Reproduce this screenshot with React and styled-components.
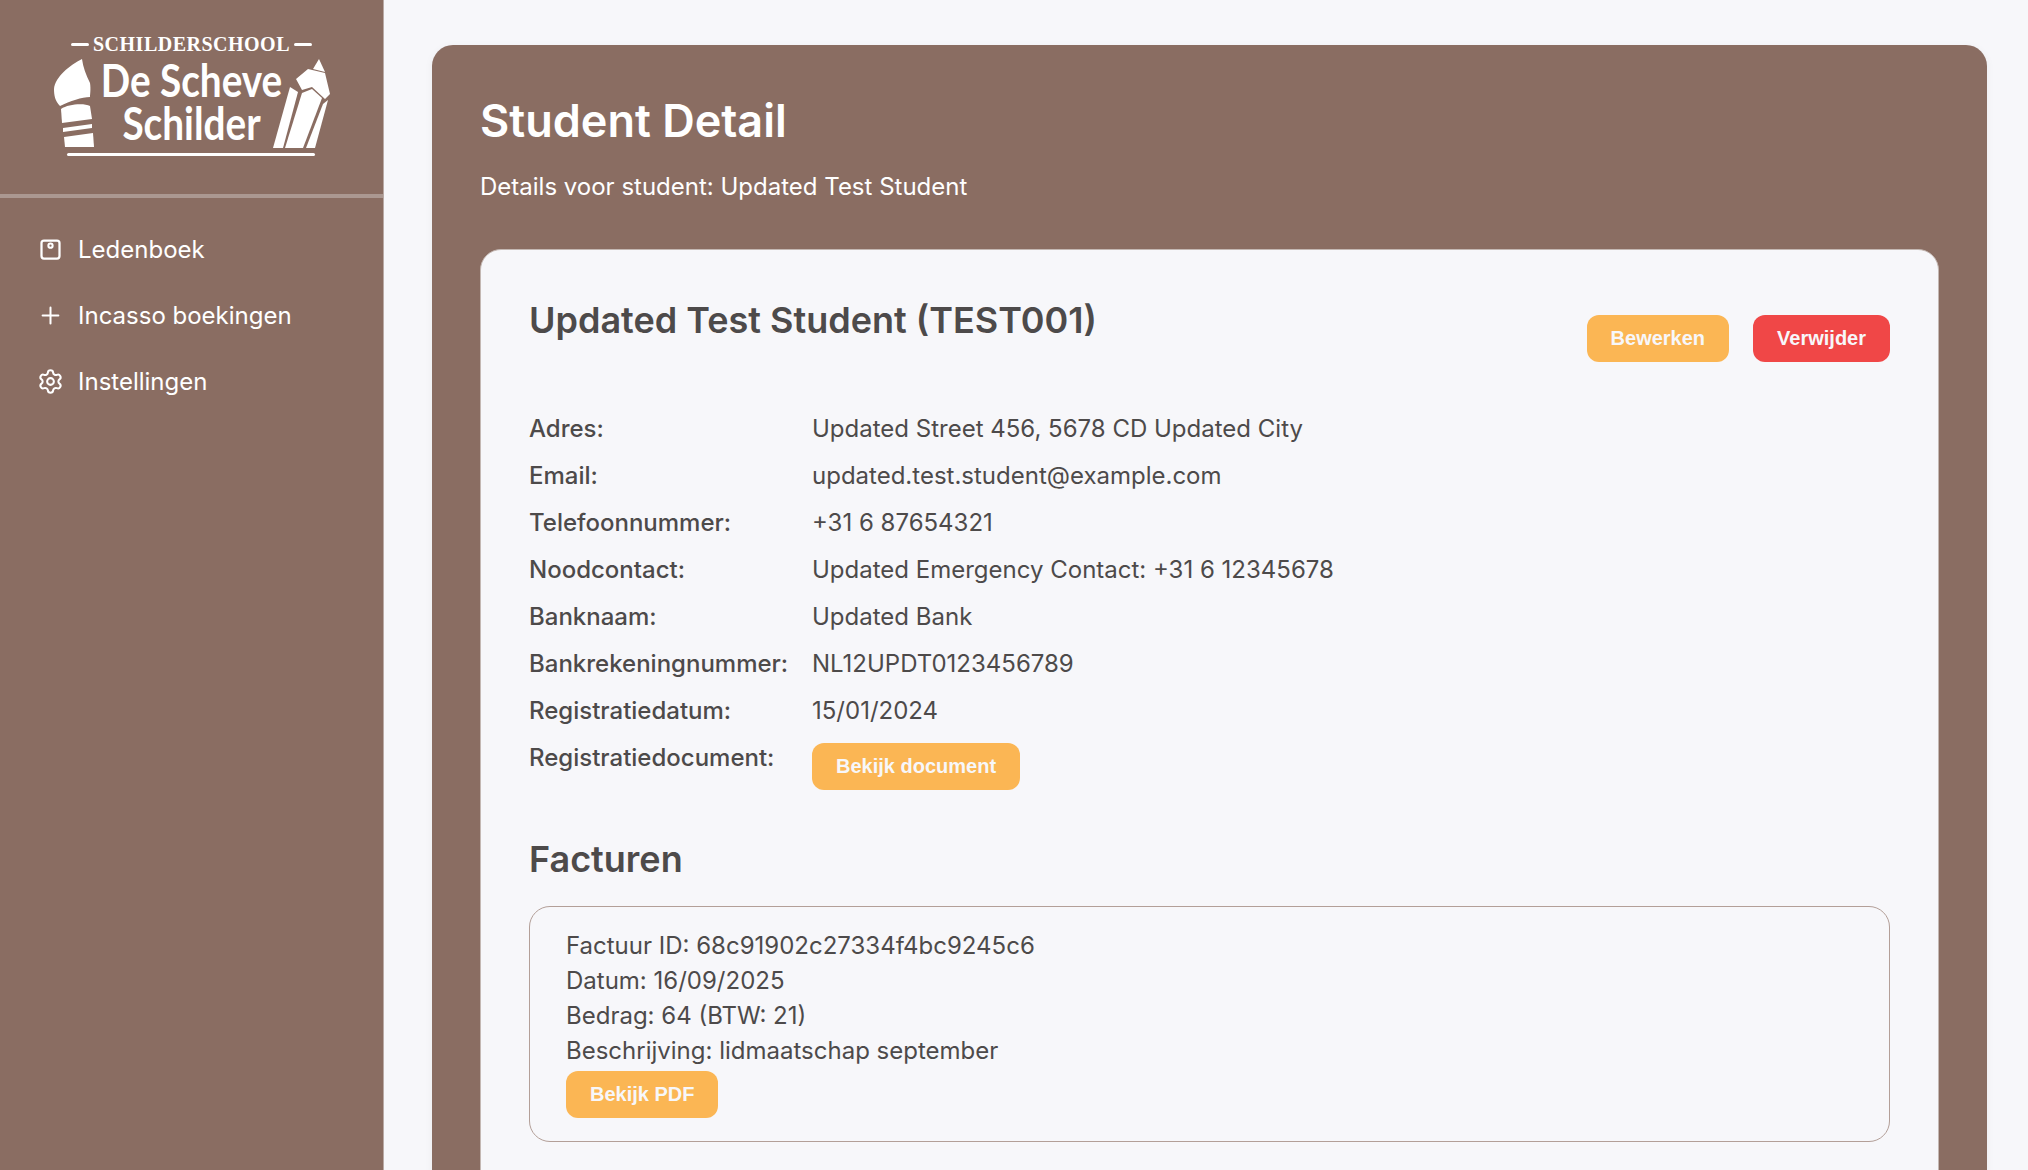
import React from 'react'
import styled, { createGlobalStyle } from 'styled-components'
import { Plus, Settings } from 'lucide-react'

const GlobalStyle = createGlobalStyle`
  html, body {
    margin: 0;
    height: 100%;
    overflow: hidden;
    background: #f7f7fa;
    font-family: 'Inter', sans-serif;
  }
`

const Page = styled.div`
  display: flex;
  height: 1170px;
  overflow: hidden;
`

const Sidebar = styled.aside`
  width: 383px;
  flex-shrink: 0;
  background: #8a6d62;
  border-right: 1px solid #b9aaa5;
`

const LogoWrap = styled.div`
  height: 194px;
  display: flex;
  align-items: flex-start;
  justify-content: center;
  border-bottom: 4px solid #ab9891;
`

const Logo = styled.div`
  width: 276px;
  height: 125px;
  margin-top: 32px;
  display: grid;
  grid-template-columns: 40px minmax(0, 1fr) 57px;
  grid-template-rows: 24px 88px 8px;
  row-gap: 3px;
  color: #fff;
`

const LogoTop = styled.div`
  grid-column: 1 / 4;
  display: flex;
  align-items: center;
  justify-content: center;
  gap: 4px;
  font-family: 'Liberation Serif', serif;
  font-size: 20px;
  font-weight: 700;
  line-height: 24px;
  letter-spacing: 0.5px;
  &::before, &::after {
    content: '';
    width: 18px;
    height: 3px;
    background: #fff;
    border-radius: 2px;
  }
`

const LogoTitle = styled.div`
  font-family: 'Lato', sans-serif;
  font-size: 45px;
  font-weight: 700;
  line-height: 43px;
  white-space: nowrap;
  display: flex;
  flex-direction: column;
  align-items: center;
  transform: translateX(8px) scaleX(0.86);
`

const LogoLine = styled.div`
  grid-column: 1 / 4;
  height: 3px;
  margin: 3px 15px 0 13px;
  background: #fff;
  border-radius: 2px;
`

const Nav = styled.nav`
  display: flex;
  flex-direction: column;
  padding-top: 18px;
`

const NavItem = styled.a`
  display: flex;
  align-items: center;
  gap: 14px;
  height: 66px;
  padding-left: 37px;
  color: #fff;
  font-size: 24px;
  svg {
    flex-shrink: 0;
  }
`

const Main = styled.main`
  flex: 1;
  padding: 45px 41px 45px 48px;
`

const Panel = styled.section`
  background: #8a6d62;
  border-radius: 21px;
  padding: 48px;
  box-shadow: 0 2px 8px rgba(0, 0, 0, 0.05);
`

const Title = styled.h1`
  margin: 0;
  color: #fff;
  font-size: 45px;
  line-height: 56px;
  font-weight: 600;
`

const Subtitle = styled.p`
  margin: 22px 0 46px;
  color: #fff;
  font-size: 24px;
  line-height: 32px;
`

const Card = styled.div`
  background: #f7f7fa;
  border: 1px solid #c4b8b3;
  border-radius: 21px;
  padding: 48px;
  color: #4d4a4a;
  min-height: 900px;
`

const CardHead = styled.div`
  display: flex;
  justify-content: space-between;
  align-items: flex-start;
  margin-bottom: 41px;
`

const CardTitle = styled.h2`
  margin: 0 0 22px;
  font-size: 36px;
  line-height: 44px;
  font-weight: 600;
`

const Actions = styled.div`
  display: flex;
  gap: 24px;
  margin-top: 17px;
`

const Button = styled.button`
  display: block;
  height: 47px;
  padding: 0 24px;
  border: none;
  border-radius: 12px;
  background: ${p => (p.$danger ? '#f04747' : '#fbb654')};
  color: #f7f7fa;
  font-family: 'Liberation Sans', sans-serif;
  font-size: 20px;
  font-weight: 700;
`

const DocButton = styled(Button)`
  margin-top: 9px;
`

const PdfButton = styled(Button)`
  margin-top: 3px;
`

const Details = styled.dl`
  display: grid;
  grid-template-columns: 283px 1fr;
  margin: 0;
  font-size: 24px;
  line-height: 47px;
`

const Label = styled.dt`
  font-weight: 500;
`

const Value = styled.dd`
  margin: 0;
`

const SectionTitle = styled.h3`
  margin: 47px 0 25px;
  font-size: 36px;
  line-height: 44px;
  font-weight: 600;
`

const Invoice = styled.div`
  border: 1px solid #b39f98;
  border-radius: 21px;
  padding: 21px 36px 23px;
  font-size: 24px;
  line-height: 35px;
`

function LedgerIcon() {
  return (
    <svg width="27" height="27" viewBox="0 0 24 24" fill="none" stroke="#fff" strokeWidth="2">
      <rect x="4" y="4" width="16" height="16" rx="2.2" />
      <circle cx="12" cy="8.6" r="1.9" strokeWidth="1.8" />
    </svg>
  )
}

function BrushIcon() {
  return (
    <svg width="40" height="88" viewBox="0 0 40 88" fill="#fff">
      <path d="M28 0 C29 8 32 16 36 24 C37 30 36 36 36 38 C28 38 16 42 6 47 C1 42 0 36 0 30 C1 18 16 6 28 0 Z" />
      <path d="M7 50 C14 45 30 44 36 47 L38 60 L8 64 Z" />
      <path d="M9 69 L38 65 L38 69 L9 73 Z" />
      <path d="M10 78 L39 74 L40 88 L11 88 Z" />
    </svg>
  )
}

function PencilIcon() {
  return (
    <svg width="57" height="89" viewBox="0 0 57 89" fill="#fff">
      <path d="M46 0 L52 13 L40 10 Z" />
      <path d="M35 10 L52 14 L57 35 L52 40 L39 28 L29 31 L23 20 Z" />
      <path d="M17 28 L25 33 L10 89 L0 89 Z" />
      <path d="M29 34 L39 30 L49 39 L30 89 L12 89 Z" />
      <path d="M55 41 L42 89 L33 89 L50 45 Z" />
    </svg>
  )
}

const fields = [
  ['Adres:', 'Updated Street 456, 5678 CD Updated City'],
  ['Email:', 'updated.test.student@example.com'],
  ['Telefoonnummer:', '+31 6 87654321'],
  ['Noodcontact:', 'Updated Emergency Contact: +31 6 12345678'],
  ['Banknaam:', 'Updated Bank'],
  ['Bankrekeningnummer:', 'NL12UPDT0123456789'],
  ['Registratiedatum:', '15/01/2024'],
]

export default function App() {
  return (
    <Page>
      <GlobalStyle />
      <Sidebar>
        <LogoWrap>
          <Logo>
            <LogoTop>SCHILDERSCHOOL</LogoTop>
            <BrushIcon />
            <LogoTitle><span>De Scheve</span><span>Schilder</span></LogoTitle>
            <PencilIcon />
            <LogoLine />
          </Logo>
        </LogoWrap>
        <Nav>
          <NavItem><LedgerIcon />Ledenboek</NavItem>
          <NavItem><Plus size={27} strokeWidth={1.8} />Incasso boekingen</NavItem>
          <NavItem><Settings size={27} strokeWidth={1.8} />Instellingen</NavItem>
        </Nav>
      </Sidebar>
      <Main>
        <Panel>
          <Title>Student Detail</Title>
          <Subtitle>Details voor student: Updated Test Student</Subtitle>
          <Card>
            <CardHead>
              <CardTitle>Updated Test Student (TEST001)</CardTitle>
              <Actions>
                <Button>Bewerken</Button>
                <Button $danger>Verwijder</Button>
              </Actions>
            </CardHead>
            <Details>
              {fields.map(([label, value]) => (
                <React.Fragment key={label}>
                  <Label>{label}</Label>
                  <Value>{value}</Value>
                </React.Fragment>
              ))}
              <Label>Registratiedocument:</Label>
              <Value><DocButton>Bekijk document</DocButton></Value>
            </Details>
            <SectionTitle>Facturen</SectionTitle>
            <Invoice>
              <div>Factuur ID: 68c91902c27334f4bc9245c6</div>
              <div>Datum: 16/09/2025</div>
              <div>Bedrag: 64 (BTW: 21)</div>
              <div>Beschrijving: lidmaatschap september</div>
              <PdfButton>Bekijk PDF</PdfButton>
            </Invoice>
          </Card>
        </Panel>
      </Main>
    </Page>
  )
}
